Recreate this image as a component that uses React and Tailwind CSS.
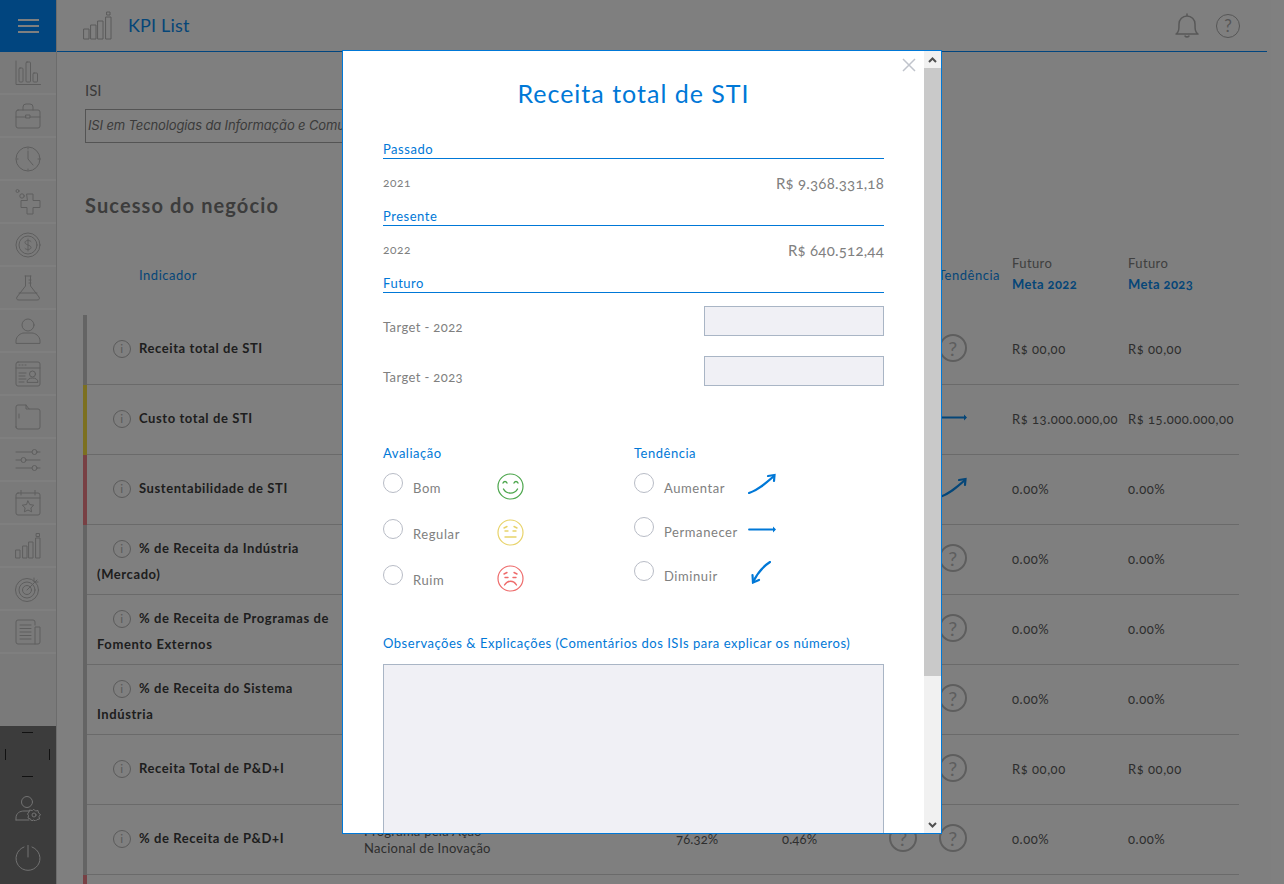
const S = ({ children, w = 26, h = 26, vb = '0 0 26 26', sw = 1, c = '#bcbcbc' }) => (
  <svg width={w} height={h} viewBox={vb} fill="none" stroke={c} strokeWidth={sw} strokeLinecap="round" strokeLinejoin="round">
    {children}
  </svg>
)

const navIcons = [
  <S><path d="M1 1v23.5h24.5" /><rect x="4" y="8" width="4" height="14" rx="1" /><rect x="11" y="2" width="4.5" height="20" rx="1" /><rect x="18" y="13" width="4.5" height="9" rx="1" /></S>,
  <S><rect x="1" y="7" width="24" height="18" rx="2" /><path d="M8 7V4a3 3 0 0 1 3-3h4a3 3 0 0 1 3 3v3M1 14h10M15 14h10" /><rect x="11" y="12" width="4" height="3" /></S>,
  <S><circle cx="13" cy="13" r="12" /><path d="M13 5v8l5 6M13 2v1M13 23v1M2 13h1M23 13h1" /></S>,
  <S><circle cx="2.500" cy="2" r="1.500" /><circle cx="7" cy="7" r="2.200" /><path d="M12 5h6v6.500h7v7h-7V25h-6v-6.500H6v-7h6z" /></S>,
  <S><circle cx="13" cy="13" r="12" /><circle cx="13" cy="13" r="9" /><path d="M16 9.500c-1-1.500-6-1.500-6 1s6 2.500 6 5-5 2.500-6 1M13 7v12" /></S>,
  <S><path d="M10 1h6M10.500 1v10L2 22c-1 2 0 3 2 3h18c2 0 3-1 2-3l-8.500-11V1M4 18h18M16 5h-2M16 8h-2" /></S>,
  <S><circle cx="13" cy="7" r="6" /><path d="M1 25v-2c0-5 5-8 8-8h8c3 0 8 3 8 8v2z" /></S>,
  <S><rect x="1" y="1" width="24" height="24" rx="2" /><path d="M1 7h24M4 4h1M7 4h1M10 4h1M4 12h7M4 15h6M4 18h7M4 21h5" /><circle cx="17.500" cy="13" r="3" /><path d="M12 21c0-3 3-4 5.500-4s5.500 1 5.500 4z" /></S>,
  <S><path d="M1 23V3a2 2 0 0 1 2-2h8l3 4h9a2 2 0 0 1 2 2v16a2 2 0 0 1-2 2H3a2 2 0 0 1-2-2zM11 1v4h3M4 10v4" /></S>,
  <S><path d="M1 5h16M22 5h3M1 13h5M11 13h14M1 21h16M22 21h3" /><circle cx="19.500" cy="5" r="2.500" /><circle cx="8.500" cy="13" r="2.500" /><circle cx="19.500" cy="21" r="2.500" /></S>,
  <S><rect x="1" y="3" width="24" height="22" rx="2" /><path d="M1 8h24M6 0v5M20 0v5M13 11l1.800 3.600 3.900.6-2.800 2.700.7 3.900-3.600-1.800-3.600 1.800.7-3.900-2.800-2.700 3.900-.6z" /></S>,
  <S><rect x="1" y="17" width="4" height="8" /><rect x="8" y="13" width="4" height="12" /><rect x="14" y="9" width="4" height="16" /><rect x="21" y="5" width="4" height="20" /><rect x="21.500" y="0.500" width="3" height="3" /></S>,
  <S><circle cx="12" cy="14" r="11.500" /><circle cx="12" cy="14" r="8" /><circle cx="12" cy="14" r="4.500" /><path d="M12 14L22 4M19 2v4h4" /></S>,
  <S><path d="M20 6V3a2 2 0 0 0-2-2H3a2 2 0 0 0-2 2v20a2 2 0 0 0 2 2h20a2 2 0 0 0 2-2V8h-5v17M5 6h11M5 9.500h11M5 13h11M5 16.500h11M5 20h11" /></S>,
]

const ArrowUp = ({ c }) => (
  <svg width="28" height="21" viewBox="0 0 28 21" fill="none" stroke={c} strokeWidth="2.200" strokeLinecap="round">
    <path d="M1 20c9-3 16-9 25-17" />
    <path d="M20 3l6.500-1-.5 6" />
  </svg>
)

const ArrowRight = ({ c }) => (
  <svg width="28" height="7" viewBox="0 0 28 7" fill="none">
    <path d="M1 3.500h25" stroke={c} strokeWidth="1.800" strokeLinecap="round" />
    <path d="M25 .5l3 3-3 3z" fill={c} />
  </svg>
)

const ArrowDown = ({ c }) => (
  <svg width="20" height="23" viewBox="0 0 20 23" fill="none" stroke={c} strokeWidth="2.200" strokeLinecap="round">
    <path d="M19 1C11 6 6 13 2 21" />
    <path d="M1.500 14l.5 7.500 6-2.500" />
  </svg>
)

const Face = ({ c, kind }) => (
  <svg width="27" height="27" viewBox="0 0 27 27" fill="none" stroke={c} strokeWidth="1.200" strokeLinecap="round">
    <circle cx="13.500" cy="13.500" r="12.500" />
    {kind === 'good' && <path d="M6 10c1-2 3-2 4 0M17 10c1-2 3-2 4 0M6.500 16c3 5.500 11 5.500 14 0" strokeWidth="1.400" />}
    {kind === 'mid' && <path d="M7 9l3-1.500M20 9l-3-1.500M8 12h3M16 12h3M8 18h11" strokeWidth="1.400" />}
    {kind === 'bad' && <path d="M7 9l3-1.500M20 9l-3-1.500M8 12.500h3M16 12.500h3M7.500 20c3-5 9-5 12 0" strokeWidth="1.400" />}
  </svg>
)

const rows = [
  { bar: 'bg-[#c8c8c8]', name: ['Receita total de STI'], m1: 'R$ 00,00', m2: 'R$ 00,00' },
  { bar: 'bg-[#f8e040]', name: ['Custo total de STI'], trend: 'right', m1: 'R$ 13.000.000,00', m2: 'R$ 15.000.000,00' },
  { bar: 'bg-[#f08088]', name: ['Sustentabilidade de STI'], trend: 'up', m1: '0.00%', m2: '0.00%' },
  { bar: 'bg-[#c8c8c8]', name: ['% de Receita da Indústria', '(Mercado)'], m1: '0.00%', m2: '0.00%' },
  { bar: 'bg-[#c8c8c8]', name: ['% de Receita de Programas de', 'Fomento Externos'], m1: '0.00%', m2: '0.00%' },
  { bar: 'bg-[#c8c8c8]', name: ['% de Receita do Sistema', 'Indústria'], m1: '0.00%', m2: '0.00%' },
  { bar: 'bg-[#c8c8c8]', name: ['Receita Total de P&D+I'], m1: 'R$ 00,00', m2: 'R$ 00,00' },
  {
    bar: 'bg-[#c8c8c8]',
    name: ['% de Receita de P&D+I'],
    m1: '0.00%',
    m2: '0.00%',
    desc: ['Programa pela Ação', 'Nacional de Inovação'],
    past: '76.32%',
    now: '0.46%',
    extra: true,
  },
  { bar: 'bg-[#f08088]', name: [''], m1: '', m2: '' },
]

const cols = 'grid grid-cols-[4px_277px_312px_106px_107px_50px_73px_116px_111px]'

const Help = ({ size = 'w-7 h-7 text-[20px] border-2 border-[#bcbcbc] text-[#bcbcbc]' }) => (
  <div className={`${size} rounded-full flex items-center justify-center`}>?</div>
)

function Row({ r }) {
  return (
    <div className={`${cols} h-[70px] text-[13px] text-[#5c5c5c] tracking-[0.04em]`}>
      <div className={r.bar} />
      <div className={`border-b border-[#d4d4d4] pl-[10px] flex items-center ${r.name[1] ? 'pt-[2px]' : 'pb-[4px]'}`}>
        {r.name[0] && (
          <div className="font-bold text-[#3c3c3c] leading-[26px] tracking-[0.045em]">
            <span className="inline-flex align-middle ml-4 mr-2 w-[18px] h-[18px] rounded-full border border-[#b4b4b4] items-center justify-center text-[12px] font-normal text-[#b4b4b4]">i</span>
            {r.name[0]}
            {r.name[1] && <br />}
            {r.name[1]}
          </div>
        )}
      </div>
      <div className="border-b border-[#d4d4d4] flex items-center leading-[17px] tracking-[0.02em]">
        {r.desc && <div>{r.desc[0]}<br />{r.desc[1]}</div>}
      </div>
      <div className="border-b border-[#d4d4d4] flex items-center tracking-[0.01em]">{r.past}</div>
      <div className="border-b border-[#d4d4d4] flex items-center tracking-[0.01em]">{r.now}</div>
      <div className="border-b border-[#d4d4d4] flex items-center pb-1">{r.extra && <Help />}</div>
      <div className="border-b border-[#d4d4d4] flex items-center pb-1">
        {r.trend === 'right' && <ArrowRight c="#0a8cf0" />}
        {r.trend === 'up' && <ArrowUp c="#0a8cf0" />}
        {!r.trend && r.name[0] && <Help />}
      </div>
      <div className="border-b border-[#d4d4d4] flex items-center">{r.m1}</div>
      <div className="border-b border-[#d4d4d4] flex items-center">{r.m2}</div>
    </div>
  )
}

const Section = ({ title }) => (
  <div className="text-[13px] leading-[16px] text-[#0078d7] border-b border-[#0078d7] pb-px tracking-[0.04em]">{title}</div>
)

const Choice = ({ label, children, gap, h }) => (
  <div className={`flex items-start ${h}`}>
    <div className="w-5 h-5 rounded-full border border-[#b8bcc6] bg-white shrink-0" />
    <div className={`ml-[10px] mt-[7px] text-[13px] leading-4 text-[#808080] tracking-[0.045em] ${gap}`}>{label}</div>
    {children}
  </div>
)

export default function App() {
  return (
    <div className="relative h-screen overflow-hidden bg-white flex oldstyle-nums font-['Lato','Liberation_Sans',sans-serif]">

      {/* sidebar */}
      <aside className="w-[57px] shrink-0 border-r border-[#d8d8d8] bg-[#f4f4f4] flex flex-col">
        <div className="h-[52px] bg-[#028aff] flex flex-col items-center justify-center gap-1 pb-px">
          <span className="w-[21px] h-0.5 bg-white" />
          <span className="w-[21px] h-0.5 bg-white" />
          <span className="w-[21px] h-0.5 bg-white" />
        </div>
        {navIcons.map((icon, i) => (
          <div key={i} className="h-[43px] border-b-2 border-white flex items-center justify-center pt-px">
            {icon}
          </div>
        ))}
        <div className="mt-auto h-[158px] bg-[#787878] flex flex-col items-center">
          <svg className="mt-[6px] self-start ml-[5px]" width="45" height="45" viewBox="0 0 45 45" fill="none" stroke="#222" strokeWidth="1">
            <path d="M17 .5h11M17 44.500h11M.5 17v11M44.500 17v11" />
          </svg>
          <div className="mt-[18px]">
            <S c="#e4e4e4">
              <circle cx="12" cy="7" r="5.500" />
              <path d="M1 25v-2c0-5 4-7 8-7h5M1 25h13" />
              <circle cx="19" cy="20" r="2" />
              <path d="M19 14.500l1.500 1.500 2.500-.5.500 2.500 2 1.500-1.500 2 .5 2.500-2.500.5-1.500 1.500-2-1-2 1-1-2-2.500-1 .5-2.500-1-1.500 1.500-2 .5-2 2.500.5z" />
            </S>
          </div>
          <div className="mt-[24px]">
            <S c="#e4e4e4">
              <path d="M13 0v12" />
              <path d="M9 2a12 12 0 1 0 8 0" />
            </S>
          </div>
        </div>
      </aside>

      {/* main */}
      <main className="flex-1 min-w-0 pl-[26px]">
        <header className="-ml-[26px] mr-[17px] h-[52px] border-b border-[#028aff] flex items-center pl-[26px] pr-[27px]">
          <S w={29} h={29} vb="0 0 29 29" c="#b4b4b4">
            <rect x="1" y="18" width="5" height="10" />
            <rect x="8" y="14" width="5" height="14" />
            <rect x="15" y="10" width="5" height="18" />
            <rect x="23" y="6" width="5" height="22" />
            <rect x="24" y="1" width="3" height="3" />
          </S>
          <h1 className="ml-4 text-[18px] text-[#0a8cf0] tracking-[0.01em] font-normal">KPI List</h1>
          <div className="ml-auto flex items-center gap-[17px]">
            <S w={24} h={26} vb="0 0 24 26" c="#b0b0b0" sw={1.500}>
              <path d="M1 21c3-2 3-5 3-10a8 8 0 0 1 16 0c0 5 0 8 3 10zM12 1v2" />
              <path d="M10 23a2.500 2.500 0 0 0 4 0" fill="#b0b0b0" />
            </S>
            <Help size="w-6 h-6 text-[17px] border-[1.5px] border-[#acacac] text-[#acacac]" />
          </div>
        </header>

        <div className="ml-0.5 mt-[29px] text-[15px] leading-[18px] text-[#777]">ISI</div>
        <div className="ml-0.5 mt-[10px] w-[600px] h-[34px] border border-[#a8a8a8] flex items-center pl-0.5 text-[13px] italic text-[#777] tracking-[-0.01em] font-['Inter',sans-serif]">
          ISI em Tecnologias da Informação e Comunicação
        </div>
        <h2 className="ml-0.5 mt-[49px] text-[20px] leading-[26px] font-bold text-[#787878] tracking-[0.056em]">Sucesso do negócio</h2>

        <div className={`${cols} mt-[22px] h-[75px] text-[13px] tracking-[0.04em]`}>
          <div />
          <div className="pl-[52px] pt-[26px] text-[#0a8cf0]">Indicador</div>
          <div />
          <div />
          <div />
          <div />
          <div className="pt-[26px] text-[#0a8cf0] -ml-px">Tendência</div>
          <div className="pt-[15px] text-[#808080] leading-[16px] tracking-[0.03em]">
            Futuro
            <div className="mt-[5px] font-bold text-[#0a8cf0]">Meta 2022</div>
          </div>
          <div className="pt-[15px] text-[#808080] leading-[16px] tracking-[0.03em]">
            Futuro
            <div className="mt-[5px] font-bold text-[#0a8cf0]">Meta 2023</div>
          </div>
        </div>

        {rows.map((r, i) => <Row key={i} r={r} />)}
      </main>

      {/* modal */}
      <div className="absolute inset-0 bg-black/50" />
      <div className="absolute left-[342px] top-[50px] w-[600px] h-[784px] border border-[#0078d7] bg-white flex overflow-hidden">
        <div className="relative flex-1 min-w-0 px-10 overflow-hidden">
          <span className="absolute right-2 top-[7px] text-[#c0c4cc]">
            <svg width="14" height="14" viewBox="0 0 14 14" stroke="currentColor" strokeWidth="1.500"><path d="M1 1l12 12M13 1L1 13" /></svg>
          </span>
          <h3 className="mt-[26px] text-center text-[25px] leading-[32px] text-[#0078d7] font-normal tracking-[0.04em]">Receita total de STI</h3>

          <div className="mt-[32px]"><Section title="Passado" /></div>
          <div className="h-[49px] flex justify-between items-center text-[#808080] pb-px">
            <span className="text-[12px] tracking-[0.04em]">2021</span>
            <span className="text-[15px] tracking-[0.015em]">R$ 9.368.331,18</span>
          </div>
          <Section title="Presente" />
          <div className="h-[49px] flex justify-between items-center text-[#808080] pb-px">
            <span className="text-[12px] tracking-[0.04em]">2022</span>
            <span className="text-[15px] tracking-[0.015em]">R$ 640.512,44</span>
          </div>
          <Section title="Futuro" />
          <div className="mt-[13px] flex justify-between h-[50px] text-[13px] text-[#808080] tracking-[0.03em]">
            <span className="mt-[12px]">Target - 2022</span>
            <div className="w-[180px] h-[30px] border border-[#a9b5c5] bg-[#f0f0f5]" />
          </div>
          <div className="flex justify-between h-[50px] text-[13px] text-[#808080] tracking-[0.03em]">
            <span className="mt-[12px]">Target - 2023</span>
            <div className="w-[180px] h-[30px] border border-[#a9b5c5] bg-[#f0f0f5]" />
          </div>

          <div className="mt-[39px] flex">
            <div className="w-[251px]">
              <div className="text-[13px] leading-4 text-[#0078d7] mb-[12px] tracking-[0.04em]">Avaliação</div>
              <Choice label="Bom" gap="w-[84px]" h="h-[46px]"><Face c="#4ca64c" kind="good" /></Choice>
              <Choice label="Regular" gap="w-[84px]" h="h-[46px]"><Face c="#e8d36a" kind="mid" /></Choice>
              <Choice label="Ruim" gap="w-[84px]" h="h-[46px]"><Face c="#ee6b6b" kind="bad" /></Choice>
            </div>
            <div>
              <div className="text-[13px] leading-4 text-[#0078d7] mb-[12px] tracking-[0.04em]">Tendência</div>
              <Choice label="Aumentar" gap="w-[84px]" h="h-[44px]"><ArrowUp c="#0078d7" /></Choice>
              <Choice label="Permanecer" gap="w-[84px]" h="h-[44px]"><span className="mt-[9px]"><ArrowRight c="#0078d7" /></span></Choice>
              <Choice label="Diminuir" gap="w-[87px]" h="h-[44px]"><ArrowDown c="#0078d7" /></Choice>
            </div>
          </div>

          <div className="mt-[24px] text-[13px] leading-4 text-[#0078d7] tracking-[0.04em] whitespace-nowrap">Observações & Explicações (Comentários dos ISIs para explicar os números)</div>
          <div className="mt-[13px] h-[300px] border border-[#a9b5c5] bg-[#f0f0f5]" />
        </div>

        {/* scrollbar */}
        <div className="w-[17px] shrink-0 bg-[#f1f1f1] flex flex-col items-center">
          <div className="h-[17px] flex items-center justify-center">
            <svg width="9" height="6" viewBox="0 0 9 6" fill="none" stroke="#505050" strokeWidth="2"><path d="M1 5l3.500-3.500L8 5" /></svg>
          </div>
          <div className="w-full h-[608px] bg-[#c9c9c9]" />
          <div className="mt-auto h-[17px] flex items-center justify-center">
            <svg width="9" height="6" viewBox="0 0 9 6" fill="none" stroke="#505050" strokeWidth="2"><path d="M1 1l3.500 3.500L8 1" /></svg>
          </div>
        </div>
      </div>
    </div>
  )
}
